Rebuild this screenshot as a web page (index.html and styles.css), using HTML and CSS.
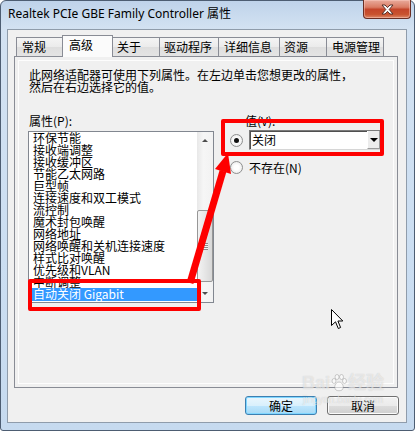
FILE: index.html
```html
<!DOCTYPE html>
<html>
<head>
    <meta charset="utf-8" />
    <title>Realtek PCIe GBE Family Controller 属性</title>
    <link rel="stylesheet" href="styles.css">
</head>
<body>
<div class="screen">
    <div class="window">
        <div class="titlebar">
            <span class="title">Realtek PCIe GBE Family Controller 属性</span>
            <div class="close">
                <svg width="13" height="11" viewBox="0 0 13 11"><path d="M1 1 H4 L6.5 3.6 L9 1 H12 L8.2 5.5 L12 10 H9 L6.5 7.4 L4 10 H1 L4.8 5.5 Z" fill="#fff" stroke="#55302a" stroke-width="1"/></svg>
            </div>
        </div>
        <div class="client">
            <div class="tabs">
                <div class="tab w46">常规</div>
                <div class="tab active w51">高级</div>
                <div class="tab w47">关于</div>
                <div class="tab w59">驱动程序</div>
                <div class="tab w61">详细信息</div>
                <div class="tab w47">资源</div>
                <div class="tab w58">电源管理</div>
            </div>
            <div class="page">
                <p class="desc">此网络适配器可使用下列属性。在左边单击您想更改的属性，<br>然后在右边选择它的值。</p>
                <div class="props">
                    <div class="left">
                        <div class="lbl">属性(P):</div>
                        <div class="listbox">
                            <ul class="items">
                                <li>环保节能</li>
                                <li>接收端调整</li>
                                <li>接收缓冲区</li>
                                <li>节能乙太网路</li>
                                <li>巨型帧</li>
                                <li>连接速度和双工模式</li>
                                <li>流控制</li>
                                <li>魔术封包唤醒</li>
                                <li>网络地址</li>
                                <li>网络唤醒和关机连接速度</li>
                                <li>样式比对唤醒</li>
                                <li>优先级和VLAN</li>
                                <li>中断调整</li>
                                <li class="sel">自动关闭 Gigabit</li>
                            </ul>
                            <div class="vscroll">
                                <div class="sb-btn"><span class="tri up"></span></div>
                                <div class="track">
                                    <div class="thumb"><span class="grip"></span></div>
                                </div>
                                <div class="sb-btn"><span class="tri down"></span></div>
                            </div>
                        </div>
                    </div>
                    <div class="right">
                        <div class="lbl val">值(V):</div>
                        <div class="opt first">
                            <span class="radio on"></span>
                            <div class="combo">
                                <span class="combo-text">关闭</span>
                                <span class="drop"><span class="tri down dark"></span></span>
                            </div>
                        </div>
                        <div class="opt">
                            <span class="radio"></span>
                            <span>不存在(N)</span>
                        </div>
                    </div>
                </div>
            </div>
            <div class="actions">
                <button class="btn default">确定</button>
                <button class="btn">取消</button>
            </div>
        </div>
    </div>

    <!-- annotations drawn over the screenshot -->
    <div class="mark box1"></div>
    <div class="mark box2"></div>
    <svg class="overlay" width="415" height="431" viewBox="0 0 415 431">
        <line x1="190" y1="283" x2="223" y2="171" stroke="#fe0000" stroke-width="7"/>
        <polygon points="228,153 215,169 231,174" fill="#fe0000"/>
    </svg>
    <div class="watermark">
        <span class="wm-big">Bai<svg class="paw" width="16" height="18" viewBox="0 0 16 18"><g fill="rgba(255,255,255,0.6)" stroke="rgba(120,120,120,0.35)"><ellipse cx="3" cy="7" rx="2" ry="2.5"/><ellipse cx="6" cy="3" rx="2" ry="2.5"/><ellipse cx="10.5" cy="3" rx="2" ry="2.5"/><ellipse cx="13.5" cy="7" rx="2" ry="2.5"/><path d="M8 8 C4 8 2.5 14 5 16 C6.5 17 9.5 17 11 16 C13.5 14 12 8 8 8 Z"/></g></svg>经验</span>
        <span class="wm-small">jingyan.baidu.com</span>
    </div>
    <svg class="cursor" width="13" height="21" viewBox="0 0 13 21">
        <path d="M0.5 0.5 V16.5 L4.5 12.8 L7.3 19.5 L9.6 18.5 L6.9 12 H11.8 Z" fill="#fff" stroke="#000" stroke-width="1"/>
    </svg>
</div>
</body>
</html>
```

FILE: styles.css
```css
* {
    margin: 0;
    padding: 0;
}
body {
    background: #fff;
    font-family: "Noto Sans CJK SC", sans-serif;
    font-size: 12px;
    color: #000;
}
.screen {
    position: relative;
    width: 415px;
    height: 431px;
    overflow: hidden;
}

/* window frame */
.window {
    box-sizing: border-box;
    width: 415px;
    height: 431px;
    border: 1px solid #4d5d72;
    border-radius: 6px 6px 3px 3px;
    background: linear-gradient(180deg, #bfd3ea 0, #d3e2f2 28px, #cbdef2 60%, #c6daef 100%);
    padding: 0 7px 7px 6px;
    display: flex;
    flex-direction: column;
}
.titlebar {
    height: 28px;
    display: flex;
    align-items: flex-start;
}
.title {
    font-family: "Noto Sans", "Noto Sans CJK SC", sans-serif;
    font-size: 12px;
    line-height: 16px;
    margin-top: 5px;
    padding-left: 1px;
    color: #000;
}
.close {
    margin-left: auto;
    margin-right: -4px;
    margin-top: -1px;
    width: 48px;
    height: 19px;
    box-sizing: border-box;
    border: 1px solid #6a2e24;
    border-top: none;
    border-radius: 0 0 4px 4px;
    background: linear-gradient(180deg, #e9ab9c 0, #da7c64 40%, #c4452a 52%, #c9532f 80%, #dd8868 100%);
    box-shadow: inset 0 0 0 1px rgba(255, 210, 200, 0.45);
    display: flex;
    align-items: center;
    justify-content: center;
}

/* client area */
.client {
    flex: 1;
    background: #f0f0f0;
    border: 1px solid #8f9cab;
    padding-top: 5px;
    display: flex;
    flex-direction: column;
}
.tabs {
    display: flex;
    align-items: flex-end;
    height: 21px;
    padding-left: 8px;
    position: relative;
    z-index: 1;
}
.tab {
    box-sizing: border-box;
    height: 19px;
    border: 1px solid #898c95;
    border-bottom: none;
    border-right: none;
    background: linear-gradient(180deg, #f4f4f4 0, #ebebeb 50%, #dedede 51%, #e4e4e4 100%);
    padding-left: 4px;
    line-height: 18px;
    white-space: nowrap;
}
.tab.w58 { border-right: 1px solid #898c95; }
.tab.active {
    height: 22px;
    margin-bottom: -1px;
    padding-left: 6px;
    background: #fbfbfb;
    border-right: 1px solid #898c95;
    margin-right: -1px;
}
.w46 { width: 46px; padding-left: 5px; }
.w51 { width: 51px; }
.w47 { width: 47px; }
.w59 { width: 59px; }
.w61 { width: 61px; padding-left: 5px; }
.w58 { width: 58px; padding-left: 5px; }

.page {
    box-sizing: border-box;
    height: 332px;
    margin: 0 8px 0 6px;
    border: 1px solid #898c95;
    box-shadow: inset 0 0 0 3px #f0f0f0, inset 0 0 0 4px #fdfdfd;
    padding: 12px 0 0 13px;
}
.desc {
    line-height: 12px;
    padding-left: 1px;
    white-space: nowrap;
}
.props {
    display: flex;
    margin-top: 22px;
}
.lbl {
    line-height: 12px;
    height: 12px;
    padding-left: 1px;
}
.left {
    width: 186px;
}
.left .lbl {
    margin-bottom: 4px;
}

/* list box */
.listbox {
    box-sizing: border-box;
    height: 172px;
    border: 1px solid #828790;
    background: #fff;
    display: flex;
}
.items {
    list-style: none;
    width: 168px;
    overflow: hidden;
}
.items li {
    height: 12px;
    line-height: 12px;
    margin-left: 2px;
    padding-left: 2px;
    white-space: nowrap;
}
.items li.sel {
    height: 13px;
    background: #3399ff;
    color: #fff;
}
.vscroll {
    width: 16px;
    display: flex;
    flex-direction: column;
    background: linear-gradient(90deg, #e8e8e8 0, #f6f6f6 40%, #f2f2f2 100%);
}
.sb-btn {
    height: 17px;
    display: flex;
    align-items: center;
    justify-content: center;
}
.track {
    flex: 1;
    display: flex;
    flex-direction: column;
    justify-content: flex-end;
    padding-bottom: 3px;
}
.thumb {
    box-sizing: border-box;
    height: 72px;
    border: 1px solid #979797;
    border-radius: 2px;
    background: linear-gradient(90deg, #f3f3f3 0, #e6e6e6 50%, #d8d8d8 100%);
    display: flex;
    align-items: center;
    justify-content: center;
}
.grip {
    width: 5px;
    height: 7px;
    background: repeating-linear-gradient(180deg, #8a8a8a 0, #8a8a8a 1px, #f4f4f4 1px, #f4f4f4 2px);
}
.tri {
    width: 0;
    height: 0;
    border-left: 3px solid transparent;
    border-right: 3px solid transparent;
}
.tri.up { border-bottom: 3px solid #4d4d4d; }
.tri.down { border-top: 3px solid #4d4d4d; }
.tri.dark {
    border-left-width: 4px;
    border-right-width: 4px;
    border-top: 4px solid #000;
}

/* value side */
.right {
    margin-left: 16px;
}
.val {
    padding-left: 15px;
}
.opt {
    display: flex;
    align-items: center;
    gap: 6px;
    line-height: 12px;
    margin-top: 11px;
}
.opt.first {
    margin-top: 3px;
    gap: 6px;
}
.radio {
    box-sizing: border-box;
    width: 13px;
    height: 13px;
    border: 1px solid #8e8f8f;
    border-radius: 50%;
    background: radial-gradient(circle, #ffffff 30%, #e2e2e2 100%);
    display: flex;
    align-items: center;
    justify-content: center;
}
.radio.on::after {
    content: "";
    width: 5px;
    height: 5px;
    border-radius: 50%;
    background: #111;
}
.combo {
    box-sizing: border-box;
    width: 132px;
    height: 20px;
    border: 1px solid;
    border-color: #7a7a7a #d6d6d6 #d6d6d6 #7a7a7a;
    box-shadow: inset 1px 1px 0 #505050;
    background: #fff;
    display: flex;
    align-items: center;
}
.combo-text {
    padding-left: 2px;
    flex: 1;
}
.drop {
    box-sizing: border-box;
    width: 13px;
    height: 18px;
    background: #ececec;
    border-left: 1px solid #fff;
    border-right: 1px solid #9a9a9a;
    border-bottom: 1px solid #9a9a9a;
    display: flex;
    align-items: center;
    justify-content: center;
}

/* buttons */
.actions {
    display: flex;
    justify-content: flex-end;
    gap: 10px;
    padding: 8px 7px 7px 0;
}
.btn {
    box-sizing: border-box;
    width: 72px;
    height: 19px;
    border: 1px solid #707070;
    border-radius: 3px;
    background: linear-gradient(180deg, #f2f2f2 0, #ebebeb 50%, #dddddd 51%, #cfcfcf 100%);
    box-shadow: inset 0 0 0 1px #fbfbfb;
    font-family: "Noto Sans CJK SC", sans-serif;
    font-size: 12px;
    line-height: 16px;
    color: #000;
}
.btn.default {
    border-color: #3c7fb1;
    background: linear-gradient(180deg, #eaf6fd 0, #d9f0fc 50%, #bee6fd 51%, #a7d9f5 100%);
    box-shadow: inset 0 0 0 1px #7fd6ff;
}

/* annotations */
.mark {
    position: absolute;
    box-sizing: border-box;
    border: 4px solid #fe0000;
    border-radius: 2px;
}
.box1 {
    left: 28px;
    top: 279px;
    width: 173px;
    height: 32px;
}
.box2 {
    left: 221px;
    top: 119px;
    width: 163px;
    height: 37px;
}
.overlay {
    position: absolute;
    left: 0;
    top: 0;
}
.cursor {
    position: absolute;
    left: 331px;
    top: 309px;
}
.watermark {
    position: absolute;
    left: 300px;
    top: 372px;
    width: 86px;
    color: rgba(255, 255, 255, 0.55);
    text-shadow: 0 0 1px rgba(120, 120, 120, 0.35);
    display: flex;
    flex-direction: column;
    align-items: center;
}
.wm-big {
    display: flex;
    align-items: center;
    font-family: "Liberation Sans", "Noto Sans CJK SC", sans-serif;
    font-size: 18px;
    line-height: 22px;
    font-weight: bold;
}
.paw {
    margin: 0 1px;
}
.wm-small {
    font-family: "Liberation Sans", sans-serif;
    font-size: 10px;
    line-height: 12px;
}
```
